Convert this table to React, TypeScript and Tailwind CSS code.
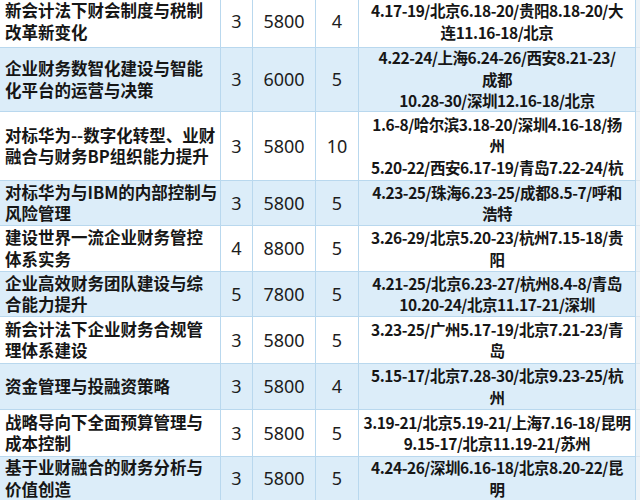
import React from 'react';

interface Course {
  name: string[];
  days: number;
  price: number;
  count: number;
  places: string[];
  h: string;
}

const courses: Course[] = [
  {
    name: ['新会计法下财会制度与税制', '改革新变化'],
    days: 3, price: 5800, count: 4,
    places: ['4.17-19/北京6.18-20/贵阳8.18-20/大', '连11.16-18/北京'],
    h: 'h-[52px] -mt-[4px]',
  },
  {
    name: ['企业财务数智化建设与智能', '化平台的运营与决策'],
    days: 3, price: 6000, count: 5,
    places: ['4.22-24/上海6.24-26/西安8.21-23/', '成都', '10.28-30/深圳12.16-18/北京'],
    h: 'h-[64px]',
  },
  {
    name: ['对标华为--数字化转型、业财', '融合与财务BP组织能力提升'],
    days: 3, price: 5800, count: 10,
    places: ['1.6-8/哈尔滨3.18-20/深圳4.16-18/扬', '州', '5.20-22/西安6.17-19/青岛7.22-24/杭'],
    h: 'h-[69px]',
  },
  {
    name: ['对标华为与IBM的内部控制与', '风险管理'],
    days: 3, price: 5800, count: 5,
    places: ['4.23-25/珠海6.23-25/成都8.5-7/呼和', '浩特'],
    h: 'h-[45px]',
  },
  {
    name: ['建设世界一流企业财务管控', '体系实务'],
    days: 4, price: 8800, count: 5,
    places: ['3.26-29/北京5.20-23/杭州7.15-18/贵', '阳'],
    h: 'h-[46px]',
  },
  {
    name: ['企业高效财务团队建设与综', '合能力提升'],
    days: 5, price: 7800, count: 5,
    places: ['4.21-25/北京6.23-27/杭州8.4-8/青岛', '10.20-24/北京11.17-21/深圳'],
    h: 'h-[45px]',
  },
  {
    name: ['新会计法下企业财务合规管', '理体系建设'],
    days: 3, price: 5800, count: 5,
    places: ['3.23-25/广州5.17-19/北京7.21-23/青', '岛'],
    h: 'h-[47px]',
  },
  {
    name: ['资金管理与投融资策略'],
    days: 3, price: 5800, count: 4,
    places: ['5.15-17/北京7.28-30/北京9.23-25/杭', '州'],
    h: 'h-[46px]',
  },
  {
    name: ['战略导向下全面预算管理与', '成本控制'],
    days: 3, price: 5800, count: 5,
    places: ['3.19-21/北京5.19-21/上海7.16-18/昆明', '9.15-17/北京11.19-21/苏州'],
    h: 'h-[47px]',
  },
  {
    name: ['基于业财融合的财务分析与', '价值创造'],
    days: 3, price: 5800, count: 5,
    places: ['4.24-26/深圳6.16-18/北京8.20-22/昆', '明'],
    h: 'h-[44px]',
  },
];

const cell = 'border-r border-b border-[#b9d8ee] flex items-center overflow-hidden';
const num = `${cell} justify-center text-[18px] text-[#1d1d1d] font-['Noto_Sans','Noto_Sans_CJK_SC',sans-serif]`;

const App: React.FC = () => {
  return (
    <div className="w-[640px] h-[500px] overflow-hidden bg-white font-['Noto_Sans_CJK_SC',sans-serif] text-[#161616]">
      {courses.map((c, i) => (
        <div
          key={i}
          className={`grid grid-cols-[221px_32px_63px_43px_277px_4px] ${c.h} ${
            i % 2 === 1 ? 'bg-[#dcedf9]' : 'bg-white'
          }`}
        >
          {/* Course name */}
          <div className={`${cell} pl-[5px] text-[16.5px] font-semibold leading-[21.5px]`}>
            <div className="whitespace-nowrap">
              {c.name.map((l, j) => (
                <div key={j}>{l}</div>
              ))}
            </div>
          </div>
          <div className={num}>{c.days}</div>
          <div className={num}>{c.price}</div>
          <div className={num}>{c.count}</div>
          {/* Dates / cities */}
          <div className={`${cell} justify-center text-[15.5px] font-bold leading-[21.5px] tracking-[-0.45px]`}>
            <div className="whitespace-nowrap text-center">
              {c.places.map((l, j) => (
                <div key={j}>{l}</div>
              ))}
            </div>
          </div>
          <div className="bg-[#eef3f7] border-b border-[#dde7ee]" />
        </div>
      ))}
      <div className="grid grid-cols-[221px_32px_63px_43px_277px_4px] h-[10px] bg-[#dcedf9]">
        <div className="border-r border-[#b9d8ee]" />
        <div className="border-r border-[#b9d8ee]" />
        <div className="border-r border-[#b9d8ee]" />
        <div className="border-r border-[#b9d8ee]" />
        <div className="border-r border-[#b9d8ee]" />
        <div className="bg-[#eef3f7]" />
      </div>
    </div>
  );
};

export default App;
